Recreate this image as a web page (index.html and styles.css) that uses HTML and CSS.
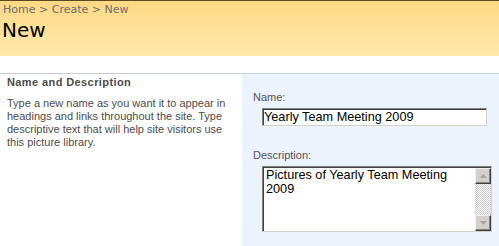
FILE: index.html
```html
<!DOCTYPE html>
<html lang="en">
<head>
    <meta charset="UTF-8">
    <title>New</title>
    <link rel="stylesheet" href="styles.css">
</head>
<body>
    <div class="titlearea">
        <div class="crumbs"><a href="#">Home</a> &gt; <a href="#">Create</a> &gt; New</div>
        <h1>New</h1>
    </div>
    <div class="spacer"></div>
    <div class="section">
        <div class="desc">
            <h3>Name and Description</h3>
            <p>Type a new name as you want it to appear in headings and links throughout the site. Type descriptive text that will help site visitors use this picture library.</p>
        </div>
        <div class="controls">
            <label for="name">Name:</label>
            <input type="text" id="name" value="Yearly Team Meeting 2009">
            <label for="description" class="second">Description:</label>
            <div class="textbox">
                <textarea id="description">Pictures of Yearly Team Meeting 2009</textarea>
                <div class="scrollbar">
                    <div class="sb-button">
                        <svg width="7" height="4" viewBox="0 0 7 4"><polygon points="3.5,0 7,4 0,4" fill="#a3a3a3"/></svg>
                    </div>
                    <div class="sb-track"></div>
                    <div class="sb-button">
                        <svg width="7" height="4" viewBox="0 0 7 4"><polygon points="0,0 7,0 3.5,4" fill="#a3a3a3"/></svg>
                    </div>
                </div>
            </div>
        </div>
    </div>
</body>
</html>
```

FILE: styles.css
```css
body {
    margin: 0;
    font-family: "Liberation Sans", Arial, sans-serif;
    font-size: 11px;
    line-height: 13px;
    color: #4c4c4c;
    background-color: #fff;
}
.titlearea {
    height: 53px;
    border-top: 1px solid #5a4a1e;
    padding: 2px 2px 0;
    background: linear-gradient(#fed985, #fee9aa);
    font-family: "DejaVu Sans", Verdana, sans-serif;
}
.crumbs {
    font-size: 11px;
    line-height: 13px;
    color: #6b6b6b;
    padding-left: 1px;
}
.crumbs a {
    color: #6b6b6b;
    text-decoration: none;
}
h1 {
    margin: 2px 0 0;
    font-size: 20px;
    font-weight: normal;
    line-height: 24px;
    color: #000;
}
.spacer {
    height: 17px;
}
.section {
    display: flex;
    min-height: 172px;
    border-top: 1px solid #c6cdd6;
}
.desc {
    width: 228px;
    padding: 2px 7px 0;
}
h3 {
    margin: 0;
    font-size: 11px;
    font-weight: bold;
    letter-spacing: 0.4px;
    color: #4c4c4c;
}
.desc p {
    margin: 8px 0 0;
}
.controls {
    flex: 1;
    display: flex;
    flex-direction: column;
    align-items: flex-start;
    padding: 17px 7px 0 11px;
    background-color: #ecf3fd;
}
label {
    display: block;
    color: #525252;
}
label.second {
    margin-top: 23px;
}
input[type="text"] {
    box-sizing: border-box;
    width: 225px;
    height: 18px;
    margin: 4px 0 0 9px;
    padding: 0 0 0 1px;
    border: 1px solid;
    border-color: #7f7f7f #d4d0c8 #d4d0c8 #7f7f7f;
    box-shadow: inset 1px 1px 0 #404040;
    background-color: #fff;
    font-family: "Liberation Sans", Arial, sans-serif;
    font-size: 12.7px;
    color: #000;
    outline: none;
}
.textbox {
    display: flex;
    box-sizing: border-box;
    width: 230px;
    height: 66px;
    margin: 4px 0 0 9px;
    border: 1px solid;
    border-color: #7f7f7f #d4d0c8 #d4d0c8 #7f7f7f;
    box-shadow: inset 1px 1px 0 #404040;
    background-color: #fff;
}
textarea {
    flex: 1;
    margin: 1px 0 0 1px;
    padding: 0 0 0 2px;
    border: none;
    resize: none;
    overflow: hidden;
    background: transparent;
    font-family: "Liberation Sans", Arial, sans-serif;
    font-size: 12.7px;
    line-height: 14px;
    color: #000;
    outline: none;
}
.scrollbar {
    display: flex;
    flex-direction: column;
    width: 16px;
    margin-top: 1px;
}
.sb-track {
    flex: 1;
    background: repeating-conic-gradient(#c8c8c8 0 25%, #fff 0 50%) 0 0 / 2px 2px;
}
.sb-button {
    box-sizing: border-box;
    height: 16px;
    display: flex;
    align-items: center;
    justify-content: center;
    background-color: #d4d0c8;
    border: 1px solid;
    border-color: #f0f0f0 #404040 #404040 #f0f0f0;
    box-shadow: inset -1px -1px 0 #808080;
}
```
